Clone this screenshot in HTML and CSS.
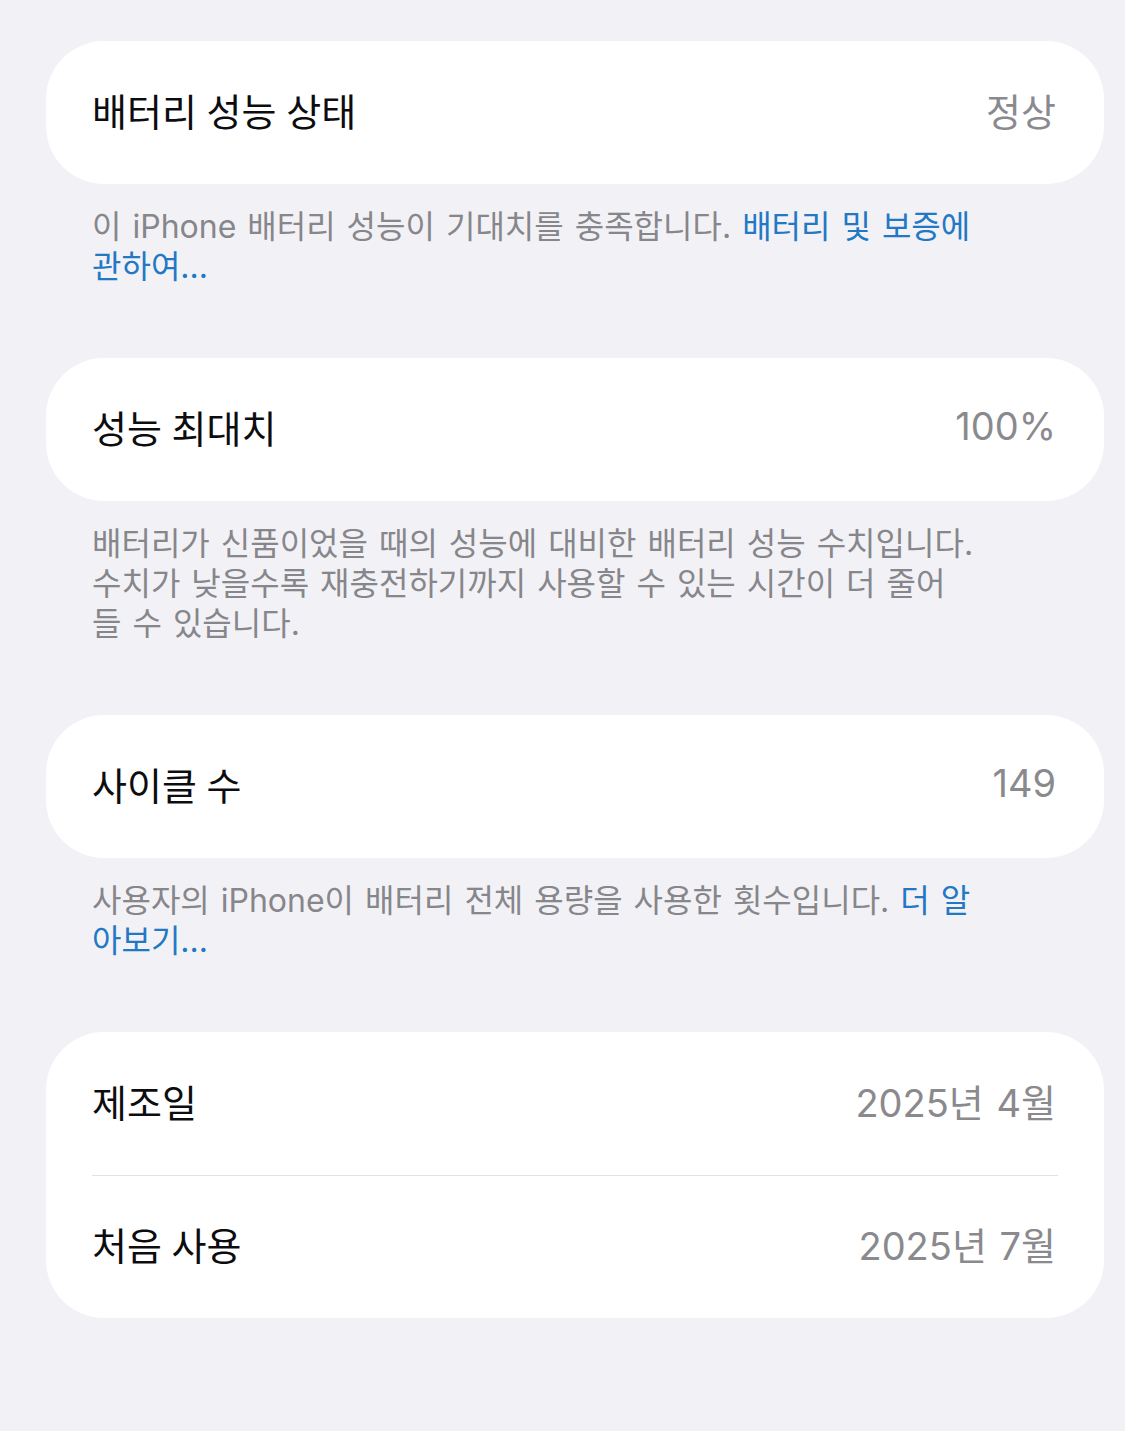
FILE: index.html
```html
<!DOCTYPE html>
<html lang="ko">
<head>
<meta charset="utf-8">
<title>배터리 성능 상태</title>
<link rel="stylesheet" href="styles.css">
</head>
<body>
<main class="page">
  <section class="group">
    <div class="card">
      <div class="row">
        <span class="label">배터리 성능 상태</span>
        <span class="value">정상</span>
      </div>
    </div>
    <p class="caption">이 iPhone 배터리 성능이 기대치를 충족합니다. <a class="link" href="#">배터리 및 보증에<br>관하여...</a></p>
  </section>

  <section class="group">
    <div class="card">
      <div class="row">
        <span class="label">성능 최대치</span>
        <span class="value">100%</span>
      </div>
    </div>
    <p class="caption">배터리가 신품이었을 때의 성능에 대비한 배터리 성능 수치입니다.<br>수치가 낮을수록 재충전하기까지 사용할 수 있는 시간이 더 줄어<br>들 수 있습니다.</p>
  </section>

  <section class="group">
    <div class="card">
      <div class="row">
        <span class="label">사이클 수</span>
        <span class="value">149</span>
      </div>
    </div>
    <p class="caption">사용자의 iPhone이 배터리 전체 용량을 사용한 횟수입니다. <a class="link" href="#">더 알<br>아보기...</a></p>
  </section>

  <section class="group">
    <div class="card">
      <div class="row">
        <span class="label">제조일</span>
        <span class="value">2025년 4월</span>
      </div>
      <div class="divider"></div>
      <div class="row">
        <span class="label">처음 사용</span>
        <span class="value">2025년 7월</span>
      </div>
    </div>
  </section>
</main>
</body>
</html>
```

FILE: styles.css
```css
html, body {
  margin: 0;
  padding: 0;
}

body {
  background: #f2f2f6;
  font-family: "Inter", "Noto Sans CJK KR", sans-serif;
  -webkit-font-smoothing: antialiased;
}

.page {
  display: flex;
  flex-direction: column;
  padding: 41px 21px 0 46px;
}

.group {
  display: flex;
  flex-direction: column;
}

.card {
  background: #ffffff;
  border-radius: 58px;
  display: flex;
  flex-direction: column;
}

/* each setting row: label on the left, grey value on the right */
.row {
  height: 143px;
  box-sizing: border-box;
  display: flex;
  align-items: center;
  justify-content: space-between;
  padding: 0 48px 7px 46px;
}

.divider + .row {
  height: 142px;
}

.label {
  font-size: 38px;
  color: #0d0d0f;
  word-spacing: -1px;
}

.value {
  font-size: 38px;
  color: #8a8a8e;
  word-spacing: 2px;
}

.divider {
  height: 1px;
  background: #e2e2e6;
  margin: 0 46px 0 46px;
}

.caption {
  margin: 23px 0 71px 0;
  padding: 0 46px;
  font-size: 32px;
  line-height: 40px;
  color: #86868b;
  word-spacing: 2px;
}

.link {
  color: #2378c4;
  text-decoration: none;
}
```
